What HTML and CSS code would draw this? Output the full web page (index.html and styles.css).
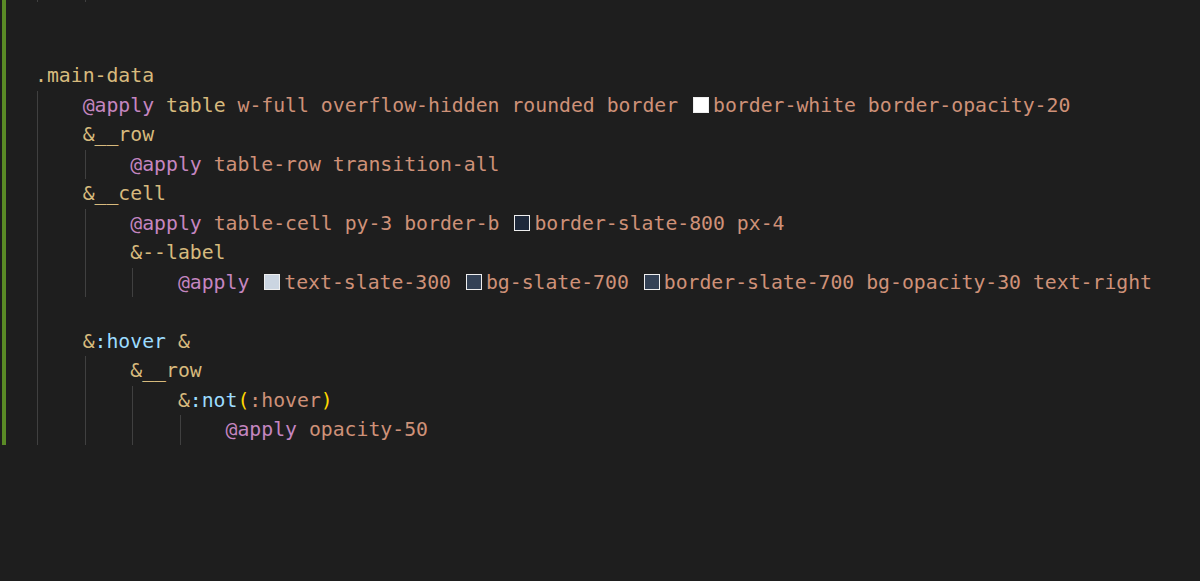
FILE: index.html
```html
<!DOCTYPE html>
<html lang="en">
<head>
<meta charset="utf-8">
<title>Editor</title>
<link rel="stylesheet" href="styles.css">
</head>
<body>
<div class="editor">
  <div class="gutter"><div class="diff-bar"></div></div>
  <div class="code">
    <div class="line stub"><span class="ind"></span><span class="ind"></span></div>
    <div class="line"></div>
    <div class="line"></div>
    <div class="line"><span class="sel">.main-data</span></div>
    <div class="line"><span class="ind"></span><span class="kw">@apply</span> <span class="sel">table</span> <span class="val">w-full overflow-hidden rounded border </span><span class="sw sw-white"></span><span class="val">border-white border-opacity-20</span></div>
    <div class="line"><span class="ind"></span><span class="sel">&amp;__row</span></div>
    <div class="line"><span class="ind"></span><span class="ind"></span><span class="kw">@apply</span> <span class="val">table-row transition-all</span></div>
    <div class="line"><span class="ind"></span><span class="sel">&amp;__cell</span></div>
    <div class="line"><span class="ind"></span><span class="ind"></span><span class="kw">@apply</span> <span class="val">table-cell py-3 border-b </span><span class="sw sw-s800"></span><span class="val">border-slate-800 px-4</span></div>
    <div class="line"><span class="ind"></span><span class="ind"></span><span class="sel">&amp;--label</span></div>
    <div class="line"><span class="ind"></span><span class="ind"></span><span class="ind"></span><span class="kw">@apply</span> <span class="sw sw-s300"></span><span class="val">text-slate-300 </span><span class="sw sw-s700"></span><span class="val">bg-slate-700 </span><span class="sw sw-s700"></span><span class="val">border-slate-700 bg-opacity-30 text-right</span></div>
    <div class="line"><span class="ind"></span></div>
    <div class="line"><span class="ind"></span><span class="sel">&amp;</span><span class="pc">:hover</span> <span class="sel">&amp;</span></div>
    <div class="line"><span class="ind"></span><span class="ind"></span><span class="sel">&amp;__row</span></div>
    <div class="line"><span class="ind"></span><span class="ind"></span><span class="ind"></span><span class="sel">&amp;</span><span class="pc">:not</span><span class="br">(</span><span class="val">:hover</span><span class="br">)</span></div>
    <div class="line"><span class="ind"></span><span class="ind"></span><span class="ind"></span><span class="ind"></span><span class="kw">@apply</span> <span class="val">opacity-50</span></div>
  </div>
</div>
</body>
</html>
```

FILE: styles.css
```css
html, body {
  margin: 0;
  padding: 0;
  background: #1e1e1e;
  height: 100%;
  overflow: hidden;
}

.editor {
  display: flex;
  align-items: stretch;
  font-family: "DejaVu Sans Mono", "Liberation Mono", monospace;
  font-size: 19.8px;
  line-height: 29.5px;
  color: #d4d4d4;
}

.gutter {
  width: 35px;
  flex: none;
  padding-left: 2px;
  box-sizing: border-box;
  display: flex;
}

.diff-bar {
  width: 4px;
  background: #5a8a26;
}

.code {
  flex: 1;
}

.line {
  height: 29.5px;
  white-space: pre;
}

.line.stub {
  height: 2px;
  overflow: hidden;
}

.ind {
  display: inline-block;
  width: 4ch;
  height: 29.5px;
  vertical-align: top;
  background: linear-gradient(#404040, #404040) 2px 0 / 1px 100% no-repeat;
}

.sel { color: #d7ba7d; }
.kw { color: #c586c0; }
.val { color: #ce9178; }
.pc { color: #9cdcfe; }
.br { color: #ffd700; }

.sw {
  display: inline-block;
  box-sizing: border-box;
  width: 16px;
  height: 16px;
  margin: 0 4px 0 3px;
  border: 1.5px solid #eeeeee;
  vertical-align: -1px;
}

.sw-white { background: #ffffff; }
.sw-s800 { background: #1e293b; }
.sw-s300 { background: #cbd5e1; }
.sw-s700 { background: #334155; }
```
